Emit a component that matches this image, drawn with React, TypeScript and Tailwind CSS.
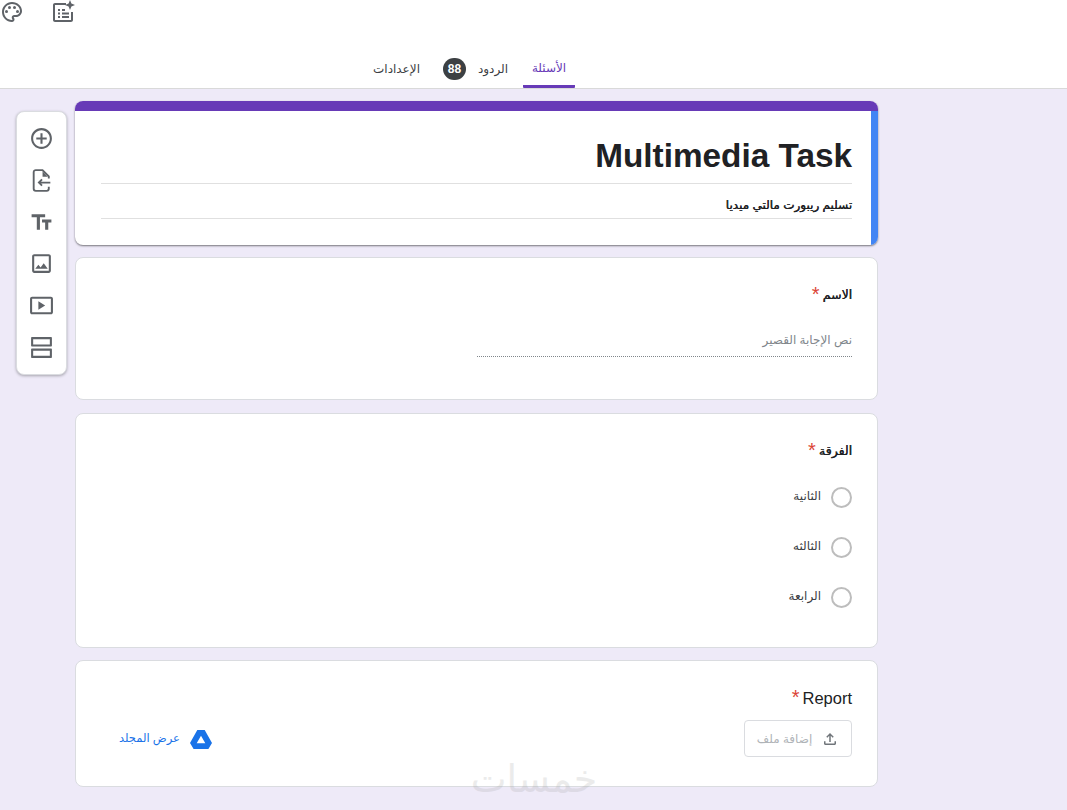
import React from 'react';

const font = "font-['Liberation_Sans','DejaVu_Sans',sans-serif]";
// DejaVu bold runs far wider than the Arabic face in the shot, so fake the weight
const heavy = '[text-shadow:0.4px_0_0_currentColor]';

const Icon: React.FC<{ size?: number; className?: string; children: React.ReactNode }> = ({ size = 24, className = 'text-[#5f6368]', children }) => (
  <svg width={size} height={size} viewBox="0 0 24 24" fill="currentColor" className={className}>
    {children}
  </svg>
);

const Star = () => <span className="-mt-[1px] text-[#db4437] text-[20px] leading-[20px] font-normal [text-shadow:none]">*</span>;

const Card: React.FC<{ className?: string; children: React.ReactNode }> = ({ className = '', children }) => (
  <section className={`bg-white border border-[#dadce0] rounded-lg ${className}`}>{children}</section>
);

const tools = [
  <path key="a" d="M13 7h-2v4H7v2h4v4h2v-4h4v-2h-4V7zm-1-5C6.48 2 2 6.48 2 12s4.48 10 10 10 10-4.48 10-10S17.52 2 12 2zm0 18c-4.41 0-8-3.59-8-8s3.59-8 8-8 8 3.59 8 8-3.59 8-8 8z" />,
  <g key="b">
    <path d="M19 10V8l-6-6H6.500a2 2 0 0 0-2 2v16a2 2 0 0 0 2 2H17a2 2 0 0 0 2-2v-2" fill="none" stroke="currentColor" strokeWidth="1.8" />
    <path d="M13 3v5.500h5z" />
    <path d="M20.500 14H9.500m3-3-3 3 3 3" fill="none" stroke="currentColor" strokeWidth="1.8" />
  </g>,
  <path key="c" d="M2.500 4v3h5v12h3V7h5V4h-13zm19 5h-9v3h3v7h3v-7h3V9z" />,
  <path key="d" d="M19 5v14H5V5h14m0-2H5c-1.100 0-2 .9-2 2v14c0 1.100.9 2 2 2h14c1.100 0 2-.9 2-2V5c0-1.100-.9-2-2-2zm-4.860 8.860l-3 3.870L9 13.140 6 17h12l-3.860-5.140z" />,
  <path key="e" d="M21 3.500H3c-1.100 0-2 .9-2 2v13c0 1.100.9 2 2 2h18c1.100 0 2-.9 2-2v-13c0-1.100-.9-2-2-2zm0 15H3v-13h18v13zM9 8v8l6.500-4L9 8z" />,
  <path key="f" d="M3 2h18c.6 0 1 .4 1 1v7c0 .6-.4 1-1 1H3c-.6 0-1-.4-1-1V3c0-.6.4-1 1-1zm1 2v5h16V4H4zm-1 9h18c.6 0 1 .4 1 1v7c0 .6-.4 1-1 1H3c-.6 0-1-.4-1-1v-7c0-.6.4-1 1-1zm1 2v5h16v-5H4z" />,
];

const options = ['الثانية', 'الثالثه', 'الرابعة'];

export default function App() {
  return (
    <div className={`${font} relative h-[810px] overflow-hidden bg-[#eeeaf8] text-[#202124]`}>
      <header className="h-[89px] bg-white border-b border-[#d9d9d9] flex flex-col">
        <div className="flex h-[24px] gap-[27px]">
          <Icon>
            <path d="M12 22C6.490 22 2 17.510 2 12S6.490 2 12 2s10 4.040 10 9c0 3.310-2.690 6-6 6h-1.770c-.28 0-.5.22-.5.5 0 .12.05.23.13.33.41.47.64 1.060.64 1.670 0 1.380-1.120 2.500-2.500 2.500zm0-18c-4.410 0-8 3.590-8 8s3.590 8 8 8c.28 0 .5-.22.5-.5 0-.16-.08-.28-.14-.35-.41-.46-.63-1.050-.63-1.650 0-1.380 1.120-2.500 2.500-2.500H16c2.210 0 4-1.790 4-4 0-3.860-3.590-7-8-7z" />
            <circle cx="6.500" cy="11.500" r="1.500" />
            <circle cx="9.500" cy="7.500" r="1.500" />
            <circle cx="14.500" cy="7.500" r="1.500" />
            <circle cx="17.500" cy="11.500" r="1.500" />
          </Icon>
          <Icon>
            <path d="M4 3h11v2H4v15h16v-8h2v8c0 1.100-.9 2-2 2H4c-1.100 0-2-.9-2-2V5c0-1.100.9-2 2-2zm3 6h2v2H7V9zm0 3.500h2v2H7v-2zM7 16h2v2H7v-2zm4-3.500h7v2h-7v-2zm0 3.500h7v2h-7v-2zm0-7h3v2h-3V9z" />
            <path d="M19 0l1.400 3.600L24 5l-3.600 1.400L19 10l-1.400-3.600L14 5l3.600-1.400L19 0z" />
          </Icon>
        </div>
        <nav className="mt-auto flex items-stretch pl-[374px] h-[40px] text-[12px]">
          <a dir="rtl" className="w-[45px] flex items-center justify-center pt-[2px] text-[#3c4043]">الإعدادات</a>
          <a className="ml-[24px] flex items-center pt-[2px] text-[#3c4043]">
            <span className="w-[23px] h-[22px] rounded-full bg-[#3c4043] text-white font-bold text-[12px] flex items-center justify-center">88</span>
            <span dir="rtl" className="ml-[12px] w-[30px]">الردود</span>
          </a>
          <a dir="rtl" className="ml-[15px] w-[52px] flex items-center justify-center pt-[2px] text-[#673ab7] border-b-[3px] border-[#673ab7] rounded-b-[1px]">الأسئلة</a>
        </nav>
      </header>

      <main className="flex items-start pl-[16px] pt-[12px]">
        <aside className="mt-[10px] w-[51px] h-[264px] bg-white rounded-lg border border-[#dadce0] shadow-[0_1px_3px_rgba(0,0,0,0.3)] flex flex-col items-center justify-between py-[14px] pr-[1px]">
          {tools.map((t, i) => (
            <Icon key={i} size={25}>{t}</Icon>
          ))}
        </aside>

        <div className="ml-[8px] w-[803px] flex flex-col">
          <section className="h-[144px] rounded-lg overflow-hidden bg-white shadow-[0_1px_2px_rgba(0,0,0,0.5)] flex flex-col">
            <div className="h-[10px] bg-[#673ab7]" />
            <div className="flex-1 border-r-[7px] border-[#4285f4] pl-[26px] pr-[19px] pt-[26px]">
              <h1 className="text-[33.33px] leading-[38px] font-bold text-right text-[#202124] pb-[8px] border-b border-[#e0e0e0]">Multimedia Task</h1>
              <p dir="rtl" className={`text-[12px] leading-[17px] pt-[13px] pb-[4px] border-b border-[#e0e0e0] ${heavy}`}>تسليم ريبورت مالتي ميديا</p>
            </div>
          </section>

          <Card className="mt-[12px] h-[143px] px-[25px] pt-[27px]">
            <div dir="rtl" className={`flex items-start gap-[3px] text-[12.5px] leading-[20px] ${heavy}`}>الاسم <Star /></div>
            <div dir="rtl" className="mt-[27px] w-[375px] ml-auto text-[12px] text-[#80868b] leading-[16px] pb-[8px] border-b border-dotted border-[#80868b]">نص الإجابة القصير</div>
          </Card>

          <Card className="mt-[13px] h-[235px] px-[25px] pt-[27px]">
            <div dir="rtl" className={`flex items-start gap-[3px] text-[12.5px] leading-[20px] ${heavy}`}>الفرقة <Star /></div>
            <div dir="rtl" className="mt-[25px] flex flex-col gap-[28px]">
              {options.map((o) => (
                <label key={o} className="flex items-center gap-[10px] h-[22px] text-[12px] text-[#3c4043]">
                  <span className="w-[21px] h-[21px] rounded-full border-2 border-[#bdbdbd]" />
                  <span className="-mt-[3px]">{o}</span>
                </label>
              ))}
            </div>
          </Card>

          <Card className="mt-[12px] h-[127px] px-[25px] pt-[27px]">
            <div className="flex justify-end items-start gap-[3px] text-[16.5px] leading-[20px]"><Star /> Report</div>
            <div className="mt-[12px] flex items-center justify-between pl-[18px]">
              <a className="flex items-center gap-[9px] text-[11.5px] text-[#1a73e8]">
                <span dir="rtl" className="whitespace-nowrap">عرض المجلد</span>
                <Icon size={24} className="text-[#1a73e8]">
                  <path fillRule="evenodd" d="M8.300 3h7.400L23 16l-3.600 6H4.600L1 16 8.300 3zM12 8.800 7.700 16.200h8.600L12 8.800z" />
                </Icon>
              </a>
              <button className="w-[108px] h-[37px] rounded border border-[#dadce0] flex items-center justify-center gap-[9px] text-[12px] text-[#b0b4b8]">
                <span dir="rtl">إضافة ملف</span>
                <Icon size={18} className="text-[#70757a]">
                  <path d="M18 15v3H6v-3H4v3c0 1.100.9 2 2 2h12c1.100 0 2-.9 2-2v-3h-2zM7 9l1.410 1.410L11 7.830V16h2V7.830l2.590 2.580L17 9l-5-5-5 5z" />
                </Icon>
              </button>
            </div>
          </Card>
        </div>
      </main>

      <div dir="rtl" className="absolute left-[470px] top-[755px] w-[128px] text-center text-[38px] leading-[48px] text-[#9e9e9e] opacity-20 pointer-events-none">خمسات</div>
    </div>
  );
}
